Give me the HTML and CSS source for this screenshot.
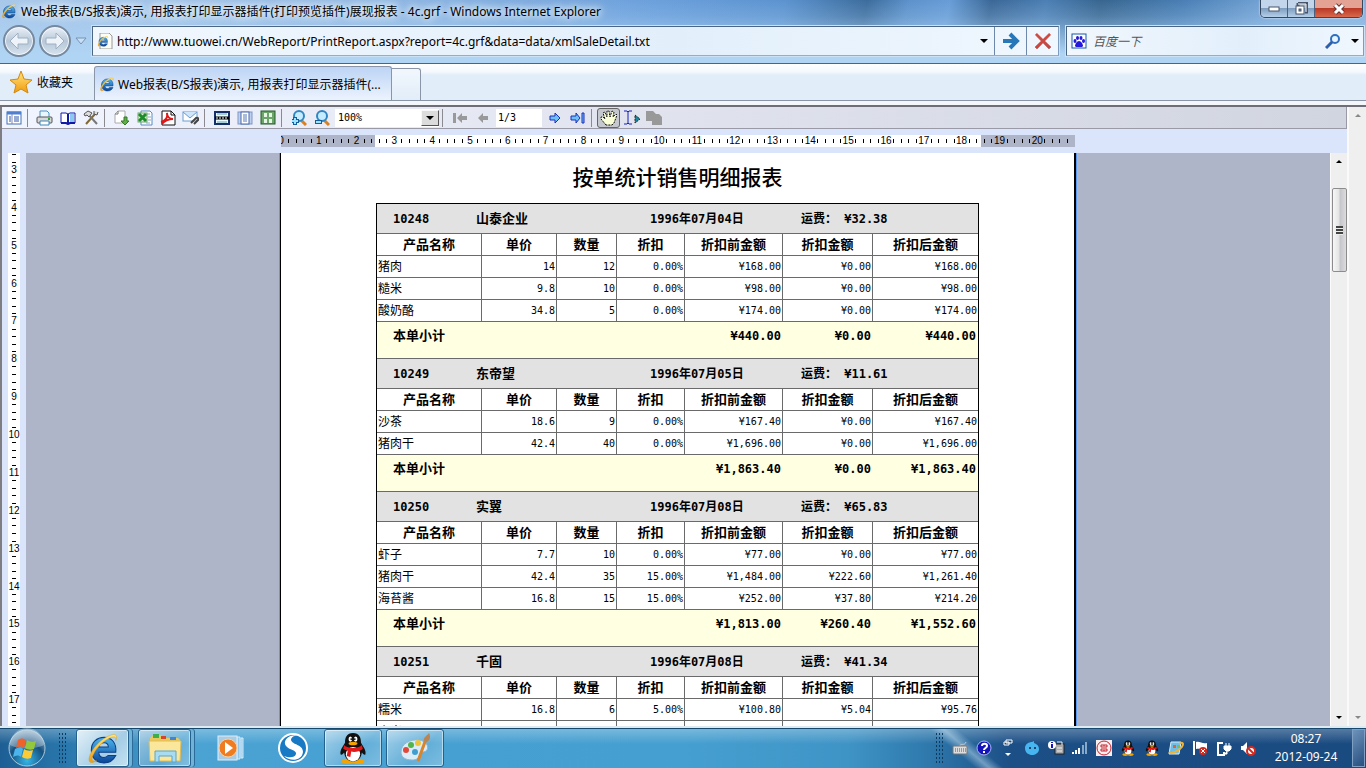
FILE: index.html
```html
<!DOCTYPE html>
<html lang="zh-CN">
  <head>
    <meta charset="UTF-8" />
    <meta name="viewport" content="width=device-width, initial-scale=1.0" />
    <title>Web报表(B/S报表)演示</title>
    <link rel="stylesheet" href="styles.css">
  </head>
  <body>
    <!-- Shared icons -->
    <svg class="defs" aria-hidden="true">
      <defs>
        <linearGradient id="g-blue" x1="0" y1="0" x2="0" y2="1">
          <stop offset="0" stop-color="#4db8f0" /><stop offset="1" stop-color="#0a4498" />
        </linearGradient>
        <linearGradient id="g-gold" x1="0" y1="0" x2="0" y2="1">
          <stop offset="0" stop-color="#ffe680" /><stop offset="1" stop-color="#f29a0c" />
        </linearGradient>
        <linearGradient id="g-red" x1="0" y1="0" x2="0" y2="1">
          <stop offset="0" stop-color="#ee8a80" /><stop offset="1" stop-color="#a01c1c" />
        </linearGradient>
        <radialGradient id="g-orb" cx="50%" cy="85%" r="80%">
          <stop offset="0" stop-color="#35b6e8" /><stop offset="0.6" stop-color="#15507f" /><stop offset="1" stop-color="#8fb0c8" />
        </radialGradient>
      </defs>
      <symbol id="ie" viewBox="0 0 32 32">
        <path d="M28 20H12c0 3 2 5 5 5 2 0 3-1 4-2h7c-2 4-5 7-11 7C10 30 5 25 5 18S10 6 17 6c7 0 12 5 11 14zM12 15h9c0-3-2-4-4-4-3 0-5 1-5 4z" fill="url(#g-blue)" stroke="#0b3f86" stroke-width="1" />
        <path d="M28 9c2-5 0-7-5-5C14 7 5 17 3 25c-1 5 2 6 7 3-5 1-5-2-3-6C10 15 18 8 24 6c3-1 5 0 4 3z" fill="url(#g-gold)" stroke="#d29512" stroke-width="0.4" />
      </symbol>
      <symbol id="qq" viewBox="0 0 32 36">
        <ellipse cx="10" cy="33" rx="7" ry="3" fill="#f5a300" /><ellipse cx="22" cy="33" rx="7" ry="3" fill="#f5a300" />
        <path d="M16 1C9 1 7 6 7 12c-3 5-6 9-5 13 1 2 3-1 4-2 1 6 4 10 10 10s9-4 10-10c1 1 3 4 4 2 1-4-2-8-5-13 0-6-2-11-9-11z" fill="#111" />
        <ellipse cx="16" cy="25" rx="8" ry="8" fill="#fff" />
        <ellipse cx="13" cy="8" rx="2" ry="3" fill="#fff" /><ellipse cx="19" cy="8" rx="2" ry="3" fill="#fff" />
        <circle cx="14" cy="8" r="1" /><circle cx="18" cy="8" r="1" />
        <ellipse cx="16" cy="13" rx="5" ry="2" fill="#f5a300" />
        <path d="M6 15c5 4 15 4 20 0l1 4c-4 3-9 4-13 3l-1 6-4-1 1-6-5-2z" fill="#e01a1a" />
      </symbol>
      <symbol id="paw" viewBox="0 0 16 16">
        <rect x="1" y="1" width="14" height="14" fill="#fff" stroke="#1458a8" />
        <g fill="#2319dc"><ellipse cx="4" cy="8" rx="1.5" ry="2" /><ellipse cx="6.5" cy="5" rx="1.5" ry="2" /><ellipse cx="10" cy="5" rx="1.5" ry="2" /><ellipse cx="12.5" cy="8" rx="1.5" ry="2" /><path d="M8 8c2 0 4 3 4 5 0 1-2 1-4 1s-4 0-4-1c0-2 2-5 4-5z" /></g>
      </symbol>
      <symbol id="down" viewBox="0 0 8 4"><path d="M0 0h8L4 4z" /></symbol>
      <symbol id="up" viewBox="0 0 8 4"><path d="M0 4h8L4 0z" /></symbol>
    </svg>

    <header class="chrome">
      <div class="title-bar">
        <svg class="i16"><use href="#ie" /></svg>
        <h1>Web报表(B/S报表)演示, 用报表打印显示器插件(打印预览插件)展现报表 - 4c.grf - Windows Internet Explorer</h1>
        <div class="win-buttons">
          <button aria-label="最小化"><svg width="12" height="6"><rect x="1" y="1" width="10" height="4" fill="#fff" stroke="#4a5668" /></svg></button>
          <button aria-label="还原"><svg width="14" height="14"><path d="M4 1h9v9h-2M4 1v3" fill="none" stroke="#48546a" stroke-width="3" /><path d="M4 2h8v8" fill="none" stroke="#fff" stroke-width="1" /><rect x="2" y="4" width="8" height="8" fill="#fff" stroke="#48546a" /><rect x="5" y="7" width="2" height="2" fill="#7790ad" stroke="#48546a" /></svg></button>
          <button class="close" aria-label="关闭"><svg width="14" height="12"><path d="M3 2l8 8M11 2l-8 8" stroke="#6c3030" stroke-width="5" /><path d="M3 2l8 8M11 2l-8 8" stroke="#fff" stroke-width="3" /></svg></button>
        </div>
      </div>
      <div class="nav-bar">
        <div class="history">
          <button aria-label="后退"><svg width="22" height="20"><path d="M10 2L2 10l8 8v-5h10V7H10z" fill="#edf3f9" stroke="#9eb0c2" /></svg></button>
          <button aria-label="前进"><svg width="22" height="20"><path d="M12 2l8 8-8 8v-5H2V7h10z" fill="#edf3f9" stroke="#9eb0c2" /></svg></button>
          <svg width="12" height="8"><path d="M1 1h10L6 7z" fill="#c9e0f6" stroke="#7794b4" /></svg>
        </div>
        <form class="address">
          <svg class="i16" viewBox="0 0 16 16"><path d="M3 0h9l3 3v13H3z" fill="#fdfdf8" stroke="#9a9a92" /><use href="#ie" x="0" y="2" width="12" height="12" /></svg>
          <input type="text" aria-label="地址" value="http://www.tuowei.cn/WebReport/PrintReport.aspx?report=4c.grf&amp;data=data/xmlSaleDetail.txt" />
          <svg class="caret"><use href="#down" /></svg>
          <button type="button" aria-label="转到"><svg width="18" height="18"><path d="M1 9h13M8 2l7 7-7 7" fill="none" stroke="#2678b8" stroke-width="4" /></svg></button>
          <button type="button" aria-label="停止"><svg width="18" height="18"><path d="M2 2l14 14M16 2L2 16" stroke="url(#g-red)" stroke-width="3" /><path d="M2 2l14 14M16 2L2 16" stroke="#c94a42" stroke-width="2" /></svg></button>
        </form>
        <form class="search">
          <svg class="i16"><use href="#paw" /></svg>
          <input type="text" aria-label="搜索" placeholder="百度一下" />
          <button type="button" aria-label="搜索"><svg width="16" height="16"><circle cx="10" cy="6" r="4" fill="#e8f5ff" stroke="#2f6fc0" stroke-width="2" /><path d="M7 9l-6 6" stroke="#2f5fa8" stroke-width="3" /></svg></button>
          <svg class="caret"><use href="#down" /></svg>
        </form>
      </div>
    </header>

    <nav class="tab-bar">
      <button class="favorites">
        <svg width="24" height="24" viewBox="0 0 24 24"><path d="M12 1l3 8 8 1-6 5 2 8-7-4-7 4 2-8-6-5 8-1z" fill="url(#g-gold)" stroke="#d08a10" /></svg>
        收藏夹
      </button>
      <a class="tab" href="#"><svg class="i16"><use href="#ie" /></svg><span>Web报表(B/S报表)演示, 用报表打印显示器插件(...</span></a>
      <button class="new-tab" aria-label="新选项卡"></button>
    </nav>

    <main class="window">
      <section class="viewer">
        <div class="toolbar">
          <button aria-label="目录"><svg width="16" height="14"><rect x="1" y="1" width="14" height="12" fill="#fff" stroke="#4070b8" /><path d="M1 2h14" stroke="#4f7fd0" stroke-width="3" /><path d="M3 6h2M3 8h2M3 10h2M8 6h5M8 8h5M8 10h5" stroke="#2d55a8" /><path d="M6 3v10" stroke="#88a" /></svg></button>
          <span class="sep"></span>
          <button aria-label="打印"><svg width="17" height="16"><path d="M4 7V1h7l2 2v4" fill="#e9f6ff" stroke="#4b91c0" /><rect x="1" y="7" width="15" height="6" rx="1" fill="#d8d8d8" stroke="#555" /><path d="M4 11h9v4H4z" fill="#fff" stroke="#3d85b5" /><path d="M12 9h2" stroke="#36a336" stroke-width="2" /></svg></button>
          <button aria-label="阅读"><svg width="16" height="14"><path d="M1 2h5l2 1 2-1h5v10h-5l-2 1-2-1H1z" fill="#fff" stroke="#1018a8" stroke-width="1" /><path d="M1 12h5l2 1 2-1h5M8 3v10" fill="none" stroke="#1018a8" stroke-width="2" /><path d="M10 3h4v8h-4z" fill="#8cc9f0" /></svg></button>
          <button aria-label="设置"><svg width="16" height="15"><path d="M3 14L12 4" stroke="#806830" stroke-width="2" /><path d="M5 4l9 10" stroke="#777" stroke-width="2" /><path d="M1 4l4-3 4 2-3 4-2-2-2 1zM11 1v3l3 1 1-3" fill="#ddd" stroke="#555" /></svg></button>
          <span class="sep"></span>
          <button aria-label="导出"><svg width="16" height="16"><path d="M4 1h7v12H1V4z" fill="#fff" stroke="#aaa" /><path d="M4 1v3H1" fill="none" stroke="#777" /><path d="M10 7h3v4h2l-4 4-4-4h3z" fill="#5ead45" stroke="#357a25" /></svg></button>
          <button aria-label="导出 Excel"><svg width="16" height="16"><path d="M4 1h9l2 2v12H4z" fill="#fff" stroke="#5b8bc8" /><path d="M9 4h4M11 7h3M11 10h3M9 13h4" stroke="#8ab" /><rect x="1" y="3" width="9" height="9" fill="#d8f0d4" stroke="#6aa868" /><path d="M2 4l7 7M9 4l-7 7" stroke="#1f8a2c" stroke-width="3" /></svg></button>
          <button aria-label="导出 PDF"><svg width="16" height="16"><path d="M2 1h9l4 4v10H2z" fill="#fff" stroke="#111" /><path d="M11 1v4h4" fill="none" stroke="#111" /><path d="M1 12c5-1 7-5 6-9 0 4 3 6 6 6-4 0-9 2-11 5" fill="none" stroke="#e01818" stroke-width="2" /></svg></button>
          <button aria-label="发送邮件"><svg width="17" height="15"><rect x="1" y="2" width="14" height="9" fill="#fff" stroke="#6c9cd0" /><path d="M1 2l7 6 7-6" fill="#cfe5fa" stroke="#6c9cd0" /><path d="M9 13l5-5c2-1 3 1 2 2l-4 4" fill="none" stroke="#444" stroke-width="2" /></svg></button>
          <span class="sep"></span>
          <button aria-label="适合宽度"><svg width="16" height="14"><rect x="1" y="1" width="14" height="12" fill="#e8fbff" stroke="#172f68" stroke-width="2" /><path d="M3 3h10M3 11h10" stroke="#67a0b0" /><path d="M1 7h14" stroke="#000" stroke-width="3" /><path d="M2 7h12" stroke="#fff" stroke-dasharray="2 1" /></svg></button>
          <button aria-label="整页"><svg width="16" height="14"><rect x="1" y="1" width="14" height="12" fill="#bcd0ef" stroke="#8098c8" /><rect x="4" y="1" width="8" height="12" fill="#fff" stroke="#4a68a8" /><path d="M6 4h4M6 6h4M6 8h4M6 10h4" stroke="#5878b8" /></svg></button>
          <button aria-label="多页"><svg width="16" height="15"><rect x="1" y="1" width="14" height="13" fill="#6ba56a" stroke="#245a28" /><g fill="#e5f6e4"><rect x="4" y="3" width="3" height="4" /><rect x="9" y="3" width="3" height="4" /><rect x="4" y="9" width="3" height="4" /><rect x="9" y="9" width="3" height="4" /></g></svg></button>
          <span class="sep"></span>
          <button aria-label="放大"><svg width="16" height="16"><path d="M9 9l6 6" stroke="#d88022" stroke-width="3" /><circle cx="8" cy="6" r="5" fill="#c5ecff" stroke="#2f86c5" stroke-width="2" /><path d="M1 11h7M4 7v8" stroke="#155f9c" stroke-width="4" /><path d="M1 11h6M4 8v6" stroke="#9be3ff" stroke-width="2" /></svg></button>
          <button aria-label="缩小"><svg width="16" height="16"><path d="M9 9l6 6" stroke="#d88022" stroke-width="3" /><circle cx="8" cy="6" r="5" fill="#c5ecff" stroke="#2f86c5" stroke-width="2" /><path d="M1 12h7" stroke="#155f9c" stroke-width="4" /><path d="M2 12h5" stroke="#9be3ff" stroke-width="2" /></svg></button>
          <div class="zoom">
            <select aria-label="缩放"><option>100%</option><option>150%</option></select>
            <span class="drop"><svg class="caret"><use href="#down" /></svg></span>
          </div>
          <span class="sep"></span>
          <button aria-label="首页" disabled><svg width="16" height="12"><path d="M1 1h3v10H1zM5 6l5-5v3h5v4h-5v3z" fill="#999" /></svg></button>
          <button aria-label="上一页" disabled><svg width="12" height="12"><path d="M1 6l5-5v3h5v4H6v3z" fill="#999" /></svg></button>
          <input class="page-no" type="text" aria-label="页码" value="1/3" />
          <button aria-label="下一页"><svg width="12" height="12"><path d="M11 6L6 1v3H1v4h5v3z" fill="#6cc0f4" stroke="#1a2ec0" /></svg></button>
          <button aria-label="末页"><svg width="16" height="12"><path d="M10 6L6 1v3H1v4h5v3zM12 1h2v10h-2z" fill="#6cc0f4" stroke="#1a2ec0" /></svg></button>
          <span class="sep"></span>
          <button class="pressed" aria-label="拖动"><svg width="18" height="16"><path d="M6 15L1 9V7h2l2 2-2-6 2-1 2 5V1h2l1 6 2-6 2 1-1 5 3-3 1 1-3 8-2 2z" fill="#fbffd8" stroke="#111" stroke-dasharray="2 1" /></svg></button>
          <button aria-label="选择文本"><svg width="18" height="15"><path d="M1 1h3l1 1 1-1h3M5 2v11M1 14h3l1-1 1 1h3" fill="none" stroke="#1721b8" /><path d="M12 5l5 4-5 4z" fill="#1787a0" stroke="#222" stroke-dasharray="2 1" /></svg></button>
          <button aria-label="复制" disabled><svg width="17" height="16"><path d="M0 1h7l3 3h3l3 3v8H6v-4H0z" fill="#999" /></svg></button>
        </div>

        <div class="ruler-row">
          <div class="ruler-h">
            <div class="scale" id="ruler-h"></div>
          </div>
        </div>

        <div class="workspace">
          <div class="ruler-v"><div class="scale" id="ruler-v"></div></div>
          <div class="canvas">
            <article class="page">
              <h2>按单统计销售明细报表</h2>
              <table>
                <colgroup>
                  <col class="c-name" /><col class="c-price" /><col class="c-qty" /><col class="c-off" />
                  <col class="c-before" /><col class="c-cut" /><col class="c-after" />
                </colgroup>
                <tbody id="report-body">
                  <!-- Order groups will be inserted here -->
                </tbody>
              </table>
            </article>
          </div>
          <div class="scrollbar">
            <svg class="caret"><use href="#up" /></svg>
            <div class="thumb"></div>
            <svg class="caret last"><use href="#down" /></svg>
          </div>
        </div>
      </section>
      <div class="scrollbar outer">
        <svg class="caret"><use href="#up" /></svg>
        <svg class="caret last"><use href="#down" /></svg>
      </div>
    </main>

    <footer class="taskbar">
      <button class="start" aria-label="开始">
        <svg width="40" height="40" viewBox="0 0 40 40"><circle cx="20" cy="20" r="18" fill="url(#g-orb)" stroke="#a9c9dc" /><path d="M3 17a17 17 0 0 1 34 0c-8 4-26 5-34 0z" fill="#fff" opacity="0.3" /><path d="M11 12c3-2 5-2 8 0l-2 8c-3-2-5-2-8 0z" fill="#f0622c" /><path d="M20 12c3 2 6 2 9 1l-2 8c-3 1-6 1-9-1z" fill="#93c83e" /><path d="M8 21c3-2 6-2 8 0l-2 8c-2-2-5-2-8 0z" fill="#4bb4ea" /><path d="M17 21c3 2 6 2 9 1l-2 8c-3 1-6 1-9-1z" fill="#fccb36" /></svg>
      </button>
      <span class="grip"></span>
      <button class="task active stacked" aria-label="Internet Explorer"><svg width="34" height="34"><use href="#ie" /></svg></button>
      <button class="task stacked" aria-label="资源管理器">
        <svg width="34" height="32" viewBox="0 0 34 32"><path d="M2 6l3-3h8l2 3h15l2 2v20H2z" fill="#e9c95c" /><rect x="5" y="2" width="6" height="4" fill="#3cae4c" /><rect x="13" y="4" width="5" height="3" fill="#d8452e" /><rect x="22" y="5" width="6" height="3" fill="#4584cf" /><path d="M1 9h32l-1 20H2z" fill="#fbe79b" stroke="#e0bd55" /><path d="M7 30V19h21v11h-4v-6H11v6z" fill="#a8dcf3" stroke="#5aa6cc" /></svg>
      </button>
      <button class="launcher" aria-label="媒体播放器">
        <svg width="32" height="28" viewBox="0 0 32 28"><path d="M22 3h3v22h-3zM26 4h2v20h-2z" fill="#8fc6ea" stroke="#d5ecfa" /><rect x="3" y="2" width="19" height="24" fill="#a8cce4" stroke="#dceefa" /><circle cx="13" cy="14" r="9" fill="#f07c22" stroke="#fbd0a5" /><path d="M10 8l8 6-8 6z" fill="#fff" /></svg>
      </button>
      <button class="launcher" aria-label="搜狗浏览器">
        <svg width="32" height="32" viewBox="0 0 32 32"><circle cx="16" cy="16" r="15" fill="#fff" /><circle cx="16" cy="16" r="13" fill="#187ac4" /><path d="M23 4C12 1 5 9 9 14c3 4 11 4 10 8-1 4-7 4-12 2 6 6 18 5 19-4 0-8-11-7-12-12 0-4 5-5 9-4z" fill="#fff" /></svg>
      </button>
      <button class="task" aria-label="QQ"><svg width="32" height="32"><use href="#qq" /></svg></button>
      <button class="task" aria-label="画图">
        <svg width="34" height="32" viewBox="0 0 34 32"><path d="M3 20C3 12 12 7 21 8c7 1 10 6 8 10-2 3-6 1-7 4-1 4-3 6-8 6C7 28 3 25 3 20z" fill="#d9ecf7" stroke="#8fb6d0" /><circle cx="8" cy="18" r="3" fill="#e0483c" /><circle cx="13" cy="13" r="3" fill="#53b34d" /><circle cx="20" cy="11" r="3" fill="#f0c33a" /><circle cx="17" cy="20" r="3" fill="#3f9ed0" /><path d="M28 7l-8 22" stroke="#d8842c" stroke-width="3" /><path d="M26 9c-1-4 3-5 5-8 2 4 1 8-3 9z" fill="#b98555" /></svg>
      </button>

      <div class="tray">
        <span class="grip"></span>
        <button aria-label="键盘"><svg width="16" height="14"><path d="M8 5c0-3 5 0 6-4" fill="none" stroke="#ccc" /><rect x="1" y="5" width="14" height="8" rx="1" fill="#ddd" stroke="#777" /><path d="M3 8h11M3 10h11" stroke="#555" stroke-dasharray="1 1" /></svg></button>
        <button aria-label="帮助"><svg width="16" height="16"><circle cx="8" cy="8" r="7" fill="#1414b8" stroke="#a8b8f0" /><path d="M6 6c0-3 5-3 5 0 0 2-3 2-3 4M8 11v2" fill="none" stroke="#fff" stroke-width="2" /></svg></button>
        <button aria-label="语言栏选项"><svg width="10" height="18"><path d="M3 1h6v3H3zM1 3h5v3H1z" fill="#1d4d80" stroke="#fff" /><path d="M2 14h6l-3 3z" fill="#fff" /></svg></button>
        <button aria-label="旺旺"><svg width="16" height="16"><path d="M1 8c0-4 4-6 7-6l2-1v2c3 1 5 3 5 6 0 4-4 6-7 6s-7-2-7-7z" fill="#46b5f0" /><circle cx="6" cy="8" r="1" fill="#124" /><circle cx="11" cy="8" r="1" fill="#124" /></svg></button>
        <button aria-label="输入设备"><svg width="17" height="16"><rect x="7" y="4" width="9" height="10" fill="#aaa" stroke="#222" /><path d="M9 2h5v3M9 8h5M9 11h5" stroke="#eee" fill="none" /><circle cx="4" cy="5" r="4" fill="#fff" /><path d="M4 2v1M4 4v4" stroke="#11c" stroke-width="2" /></svg></button>
        <button aria-label="网络"><svg width="16" height="14"><path d="M1 13v-2M4 13v-4M7 13V7" stroke="#fff" stroke-width="2" /><path d="M11 13V4M14 13V1" stroke="#88a8c8" stroke-width="2" /></svg></button>
        <button aria-label="工行"><svg width="16" height="16"><rect width="16" height="16" fill="#f8eeee" /><circle cx="8" cy="8" r="7" fill="none" stroke="#c8202c" /><path d="M5 5h6M5 11h6M8 5v6M5 5v2h2M11 5v2H9M5 11V9h2M11 11V9H9" fill="none" stroke="#c8202c" /></svg></button>
        <button aria-label="QQ 1"><svg width="14" height="16"><use href="#qq" /></svg></button>
        <button aria-label="QQ 2"><svg width="14" height="16"><use href="#qq" /></svg></button>
        <button aria-label="更新"><svg width="16" height="16"><path d="M3 2h10l-2 12H1z" fill="#6dbfe8" stroke="#d9f0fb" /><path d="M5 5h3v3H5z" fill="#e8622c" /><path d="M9 5h3v3H9z" fill="#80c040" /><path d="M1 12C5 15 15 8 15 4c0-2-3-1-4 0" fill="none" stroke="#efb437" stroke-width="2" /></svg></button>
        <button aria-label="操作中心"><svg width="16" height="16"><path d="M2 1v14" stroke="#fff" stroke-width="2" /><path d="M4 2c4-1 6 2 11 1v6c-5 1-7-1-11 0z" fill="#fff" /><circle cx="11" cy="11" r="4" fill="#d42a20" /><path d="M9 9l4 4M13 9l-4 4" stroke="#fff" /></svg></button>
        <button aria-label="电源"><svg width="16" height="16"><path d="M7 3H2v12h6v-3" fill="none" stroke="#fff" stroke-width="2" /><path d="M8 6h7v3l-2 2h-3L8 9zM10 3v3M13 3v3M11 11v3H8" fill="#fff" stroke="#fff" /></svg></button>
        <button aria-label="音量"><svg width="16" height="16"><path d="M1 6h2l4-4v12l-4-4H1z" fill="#fff" /><circle cx="11" cy="11" r="4" fill="#fff" stroke="#d42a20" stroke-width="2" /><path d="M8 8l6 6" stroke="#d42a20" stroke-width="2" /></svg></button>
        <div class="clock"><time>08:27</time><time>2012-09-24</time></div>
        <button class="show-desktop" aria-label="显示桌面"></button>
      </div>
    </footer>

    <script>
      const headings = ["产品名称", "单价", "数量", "折扣", "折扣前金额", "折扣金额", "折扣后金额"];

      const orders = [
        {
          id: "10248", customer: "山泰企业", date: "1996年07月04日", freight: "¥32.38",
          items: [
            ["猪肉", "14", "12", "0.00%", "¥168.00", "¥0.00", "¥168.00"],
            ["糙米", "9.8", "10", "0.00%", "¥98.00", "¥0.00", "¥98.00"],
            ["酸奶酪", "34.8", "5", "0.00%", "¥174.00", "¥0.00", "¥174.00"],
          ],
          total: ["¥440.00", "¥0.00", "¥440.00"],
        },
        {
          id: "10249", customer: "东帝望", date: "1996年07月05日", freight: "¥11.61",
          items: [
            ["沙茶", "18.6", "9", "0.00%", "¥167.40", "¥0.00", "¥167.40"],
            ["猪肉干", "42.4", "40", "0.00%", "¥1,696.00", "¥0.00", "¥1,696.00"],
          ],
          total: ["¥1,863.40", "¥0.00", "¥1,863.40"],
        },
        {
          id: "10250", customer: "实翼", date: "1996年07月08日", freight: "¥65.83",
          items: [
            ["虾子", "7.7", "10", "0.00%", "¥77.00", "¥0.00", "¥77.00"],
            ["猪肉干", "42.4", "35", "15.00%", "¥1,484.00", "¥222.60", "¥1,261.40"],
            ["海苔酱", "16.8", "15", "15.00%", "¥252.00", "¥37.80", "¥214.20"],
          ],
          total: ["¥1,813.00", "¥260.40", "¥1,552.60"],
        },
        {
          id: "10251", customer: "千固", date: "1996年07月08日", freight: "¥41.34",
          items: [
            ["糯米", "16.8", "6", "5.00%", "¥100.80", "¥5.04", "¥95.76"],
            ["小米", "15.6", "15", "5.00%", "¥234.00", "¥11.70", "¥222.30"],
          ],
        },
      ];

      // Build the rows of one order group
      function orderRows(order) {
        const head = `
          <tr class="order">
            <td colspan="7"><div class="order-info">
              <span>${order.id}</span><span class="customer">${order.customer}</span>
              <span>${order.date}</span><span>运费： ${order.freight}</span>
            </div></td>
          </tr>
          <tr>${headings.map((h) => `<th scope="col">${h}</th>`).join("")}</tr>`;
        const items = order.items
          .map((item) => `<tr>${item.map((v) => `<td>${v}</td>`).join("")}</tr>`)
          .join("");
        const total = order.total
          ? `<tr class="total"><td colspan="4">本单小计</td>${order.total.map((v) => `<td>${v}</td>`).join("")}</tr>`
          : "";
        return head + items + total;
      }

      // One cell per centimetre, the number in the middle of its ticks.
      // The cell after the last number only has its leading ticks.
      function renderRuler(id, from, to) {
        let cells = "";
        for (let n = from; n <= to; n++) {
          cells += `<div class="cm"><i></i><i></i><b>${n}</b><i></i><i></i></div>`;
        }
        cells += `<div class="cm"><i></i><i></i></div>`;
        document.getElementById(id).innerHTML = cells;
      }

      document.getElementById("report-body").innerHTML = orders.map(orderRows).join("");
      renderRuler("ruler-h", 0, 20);
      renderRuler("ruler-v", 3, 17);
    </script>
  </body>
</html>
```

FILE: styles.css
```css
* {
  margin: 0;
  padding: 0;
  box-sizing: border-box;
}

body {
  display: flex;
  flex-direction: column;
  height: 100vh;
  overflow: hidden;
  background-color: #f3f6fb;
  font-family: "Noto Sans", "Noto Sans CJK SC", sans-serif;
  font-size: 12px;
  color: #000;
}

button,
input,
select {
  font: inherit;
  border: none;
  background: none;
}

button {
  display: flex;
  align-items: center;
  justify-content: center;
  flex-shrink: 0;
}

svg {
  display: block;
  flex-shrink: 0;
}

.defs {
  position: absolute;
  width: 0;
  height: 0;
}

.i16 {
  width: 16px;
  height: 16px;
}

.caret {
  width: 8px;
  height: 4px;
}

/* Window frame */
.chrome {
  flex-shrink: 0;
  height: 64px;
  border-bottom: 1px solid #4d6480;
  background:
    linear-gradient(180deg, rgba(176, 212, 244, 0) 0, rgba(176, 212, 244, 0.2) 16px, rgba(176, 212, 244, 1) 54px),
    linear-gradient(100deg, #a8c8ea 0, #8db5e2 30%, #6a9fdb 48%, #5c93cf 57%, #3c6c9c 63%, #5c91ca 66%, #679cd6 69%, #3a6796 72%, #4c7fb4 76%, #37658f 80%, #4a7fb5 86%, #7ba9da 93%, #84afdc 100%);
}

.title-bar {
  display: flex;
  align-items: center;
  gap: 4px;
  height: 22px;
  padding-left: 1px;
}

.title-bar h1 {
  flex: 1;
  font-size: 12px;
  font-weight: normal;
  white-space: nowrap;
  text-shadow: 0 0 6px #fff, 0 0 10px #e4f0fc, 0 0 12px #e4f0fc;
}

.win-buttons {
  display: flex;
  align-self: flex-start;
  height: 18px;
  margin-right: 3px;
  border: 1px solid #35475e;
  border-top: none;
  border-radius: 0 0 5px 5px;
  overflow: hidden;
  box-shadow: 0 0 2px #fff;
}

.win-buttons button {
  width: 27px;
  border-right: 1px solid #4a6280;
  background: linear-gradient(#c2d5ea 0 45%, #7f9dbf 50%, #b4cfe9);
}

.win-buttons .close {
  width: 47px;
  border-right: none;
  background: linear-gradient(#e3a294 0 45%, #b93a26 50%, #d9684c);
}

.nav-bar {
  display: flex;
  align-items: center;
  gap: 7px;
  height: 38px;
  padding: 0 2px 0 3px;
}

.history {
  display: flex;
  align-items: center;
  gap: 4px;
  width: 82px;
}

.history button {
  width: 32px;
  height: 32px;
  border: 2px solid #76899f;
  border-radius: 50%;
  background: linear-gradient(#eaf1f8, #b7c7d8 50%, #d5e2ee);
  box-shadow: inset 0 0 0 1px #f2f7fc;
}

.address,
.search {
  display: flex;
  align-items: center;
  height: 30px;
  padding-left: 4px;
  border: 1px solid #5e7a9c;
  border-color: #4b6584 #7e9cbd #93aecb #4b6584;
  background: linear-gradient(90deg, #f1f7fd, #e2effb 60%, #f0f7fe);
  box-shadow: 0 0 0 1px #cbe2f6;
}

.address {
  flex: 1;
}

.search {
  width: 298px;
  gap: 4px;
  padding-right: 4px;
}

.address input,
.search input {
  flex: 1;
  min-width: 0;
  height: 26px;
  padding-left: 4px;
}

.search input {
  padding-left: 2px;
}

.search input::placeholder {
  color: #555;
  font-style: italic;
}

.search button {
  width: 28px;
}

.address button {
  width: 32px;
  height: 28px;
  border-left: 1px solid #6d88a8;
}

.address .caret {
  margin-right: 6px;
}

/* Tabs */
.tab-bar {
  display: flex;
  align-items: flex-end;
  flex-shrink: 0;
  height: 37px;
  border-bottom: 1px solid #8b95a8;
  background: linear-gradient(#fff, #f4f8fd 8px, #e1edf9 11px, #e1edf9);
}

.favorites {
  gap: 4px;
  width: 94px;
  height: 36px;
  padding-right: 12px;
}

.tab {
  display: flex;
  align-items: center;
  gap: 3px;
  width: 298px;
  height: 34px;
  padding: 0 4px;
  border: 1px solid #8b95a8;
  border-bottom: none;
  border-radius: 3px 3px 0 0;
  background: linear-gradient(#bcd4f5, #ecf3fd);
  color: #000;
  text-decoration: none;
  white-space: nowrap;
  overflow: hidden;
}

.new-tab {
  width: 29px;
  height: 32px;
  border: 1px solid #8b95a8;
  border-bottom: none;
  border-left: none;
  border-radius: 0 3px 0 0;
  background: linear-gradient(#f2f7fd, #e1edf9);
}

/* Report viewer */
.window {
  display: flex;
  flex: 1;
  min-height: 0;
  margin-top: 4px;
  border-top: 2px solid #6e6e76;
}

.viewer {
  display: flex;
  flex-direction: column;
  flex: 1;
  min-width: 0;
  border-left: 2px solid #7d7d82;
  background-color: #dae4fa;
}

.toolbar {
  display: flex;
  align-items: center;
  flex-shrink: 0;
  height: 22px;
  border-right: 1px solid #9a9aa6;
  border-bottom: 1px solid #9a9aa6;
  background: linear-gradient(90deg, #f1f5ff, #e0e3ee 50%, #d1d5e0);
  font-family: "DejaVu Sans Mono", monospace;
  font-size: 10px;
}

.toolbar button {
  width: 23px;
  height: 20px;
}

.toolbar .pressed {
  border: 1px solid #666;
  border-radius: 3px;
  background-color: #c5c8ce;
}

.sep {
  width: 8px;
  height: 18px;
  flex-shrink: 0;
  background: linear-gradient(90deg, transparent 2px, #8a8a90 2px 3px, transparent 3px);
}

.zoom {
  display: grid;
  grid-template-columns: 1fr 18px;
  width: 104px;
  height: 18px;
  margin: 0 1px 0 2px;
  background-color: #fff;
}

.zoom select {
  grid-area: 1 / 1 / 2 / 3;
  appearance: none;
  padding-left: 3px;
}

.drop {
  grid-area: 1 / 2;
  display: flex;
  align-items: center;
  justify-content: center;
  margin: 1px 0;
  border: 1px solid #f8f8f8;
  border-right-color: #555;
  border-bottom-color: #555;
  background-color: #dcdcdc;
  pointer-events: none;
}

.page-no {
  width: 46px;
  height: 18px;
  margin: 0 1px 0 2px;
  padding-left: 2px;
  background-color: #fff;
}

.ruler-row {
  display: flex;
  justify-content: center;
  flex-shrink: 0;
  padding: 6px 17px 6px 24px;
}

.ruler-h {
  width: 794px;
  height: 12px;
  overflow: hidden;
  background: linear-gradient(90deg, #afb5c8 94px, #fff 94px 700px, #afb5c8 700px);
}

.scale {
  display: grid;
  font-family: "Liberation Sans", sans-serif;
  font-size: 10px;
  line-height: 12px;
}

.ruler-h .scale {
  grid-template-columns: repeat(22, 1fr);
  width: 832px;
  margin-left: -19px;
}

.cm {
  display: grid;
  place-items: center;
}

.cm b {
  display: flex;
  justify-content: center;
  width: 0;
  font-weight: normal;
}

.cm i {
  background-color: #000;
}

.ruler-h .cm {
  grid-template-columns: repeat(5, 1fr);
}

.ruler-h i {
  width: 1px;
  height: 4px;
}

.workspace {
  display: flex;
  flex: 1;
  min-height: 0;
}

.ruler-v {
  width: 12px;
  margin: 0 6px;
  overflow: hidden;
  background-color: #fff;
}

.ruler-v .scale {
  grid-template-rows: repeat(16, 1fr);
  height: 606px;
  margin-top: -2px;
}

.ruler-v .cm {
  grid-template-rows: repeat(5, 1fr);
}

.ruler-v b {
  align-items: center;
  height: 0;
}

.ruler-v i {
  width: 4px;
  height: 1px;
}

.canvas {
  display: flex;
  justify-content: center;
  flex: 1;
  min-width: 0;
  overflow: hidden;
  background-color: #afb5c8;
}

.page {
  display: flex;
  flex-direction: column;
  align-items: center;
  width: 796px;
  height: 1123px;
  padding-top: 8px;
  border-left: 1px solid #000;
  border-right: 2px solid #000;
  background-color: #fff;
  box-shadow: 0 0 0 1px #5a9af0;
}

.page h2 {
  margin-bottom: 10px;
  font-size: 21px;
  font-weight: 500;
  line-height: 32px;
}

/* Report table */
table {
  table-layout: fixed;
  width: 603px;
  border: 1px solid #000;
  border-spacing: 0;
  font-family: "DejaVu Sans Mono", "Noto Sans CJK SC", monospace;
  font-size: 10px;
  line-height: 16px;
}

.c-name,
.c-after {
  width: 105px;
}

.c-price {
  width: 75px;
}

.c-qty {
  width: 60px;
}

.c-off {
  width: 68px;
}

.c-before {
  width: 98px;
}

.c-cut {
  width: 90px;
}

th,
td {
  height: 22px;
  border-right: 1px solid #6a6a6a;
  border-bottom: 1px solid #6a6a6a;
  white-space: nowrap;
}

tr > :last-child {
  border-right: none;
}

th {
  font-size: 13px;
}

td {
  padding: 0 1px;
  text-align: right;
}

td:first-child {
  font-size: 12px;
  text-align: left;
}

.order td {
  height: 30px;
  padding-left: 16px;
  background-color: #e2e2e2;
  font-weight: bold;
}

.order-info {
  display: grid;
  grid-template-columns: 83px 174px 151px 1fr;
}

.customer {
  font-size: 13px;
}

.total td {
  height: 37px;
  padding: 6px 2px 0;
  border-right: none;
  background-color: #ffffe1;
  font-size: 12px;
  font-weight: bold;
  vertical-align: top;
}

.total td:first-child {
  padding-left: 16px;
  font-size: 13px;
}

/* Scroll bars */
.scrollbar {
  display: flex;
  flex-direction: column;
  align-items: center;
  width: 17px;
  flex-shrink: 0;
  padding: 7px 0;
  border-left: 1px solid #fafafa;
  background-color: #efefef;
}

.scrollbar .caret {
  width: 6px;
  height: 3px;
}

.scrollbar .last {
  margin-top: auto;
}

.outer {
  width: 19px;
  border-left: 2px solid #fafafa;
}

.outer .caret {
  fill: #888;
}

.thumb {
  width: 15px;
  height: 84px;
  margin-top: 25px;
  border: 1px solid #8c8c8c;
  border-radius: 2px;
  background:
    repeating-linear-gradient(#444 0 2px, #eee 2px 3px) center / 7px 9px no-repeat,
    linear-gradient(90deg, #f7f7f7, #e4e4e6 45%, #c6c6ca 55%, #dcdcde);
}

/* Taskbar */
.taskbar {
  display: flex;
  align-items: center;
  flex-shrink: 0;
  height: 42px;
  padding-left: 7px;
  border-top: 2px solid #dfe9f0;
  background:
    linear-gradient(#14486f 1px, rgba(255, 255, 255, 0.25) 1px 2px, transparent 16px),
    linear-gradient(40deg, transparent 69%, rgba(190, 220, 240, 0.5) 70%, transparent 71%),
    linear-gradient(90deg, #1d5f94 0, #2a78ad 5%, #4ba3d3 14%, #46a0d2 28%, #459fd0 50%, #3f94c6 62%, #2e78ac 68%, #1c4f86 74%, #194a80 100%);
}

.start {
  width: 40px;
  height: 40px;
}

.grip {
  width: 8px;
  height: 32px;
  background: radial-gradient(circle, #0f3a60 1px, transparent 1px) 0 0 / 3px 4px;
}

.taskbar > .grip {
  margin: 0 10px 0 11px;
}

.task {
  width: 58px;
  height: 38px;
  margin-right: 4px;
  border: 1px solid #24618c;
  border-radius: 3px;
  background: linear-gradient(135deg, rgba(255, 255, 255, 0.5), rgba(255, 255, 255, 0.15) 60%, rgba(255, 255, 255, 0.3));
  box-shadow: inset 0 0 0 1px rgba(255, 255, 255, 0.5);
}

.active {
  background: linear-gradient(135deg, #e4f1f8, #a5cde5 60%, #c4e2f2);
}

.stacked {
  width: 53px;
  margin-right: 9px;
  box-shadow: inset 0 0 0 1px rgba(255, 255, 255, 0.5), 3px 0 0 #6fb3d8, 4px 0 0 #2d6b98;
}

.launcher {
  width: 62px;
  height: 38px;
}

.tray {
  display: flex;
  align-items: center;
  height: 40px;
  margin-left: auto;
  padding-right: 1px;
}

.tray button {
  width: 24px;
}

.tray .grip {
  margin-right: 5px;
}

.clock {
  display: flex;
  flex-direction: column;
  align-items: center;
  width: 92px;
  color: #fff;
  line-height: 18px;
}

.tray .show-desktop {
  width: 13px;
  height: 38px;
  border: 1px solid #7fa0c4;
  background: linear-gradient(135deg, #6d93bb, #274f80);
}
```
